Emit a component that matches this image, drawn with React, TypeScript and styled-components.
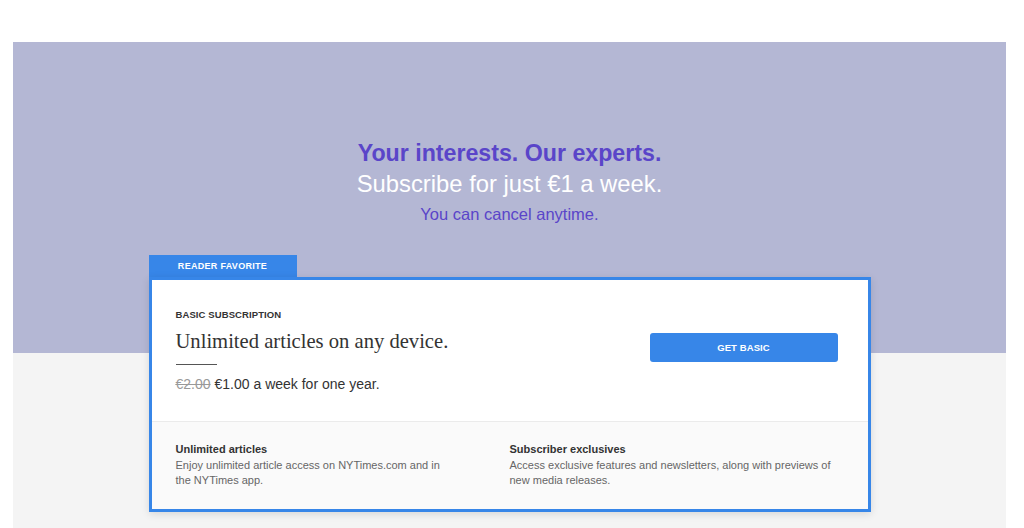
import React from "react";
import styled, { createGlobalStyle } from "styled-components";

const GlobalStyle = createGlobalStyle`
  body {
    margin: 0;
    background: #ffffff;
    font-family: "Liberation Sans", Arial, sans-serif;
  }
`;

const Page = styled.div`
  padding: 42px 18px 0 13px;
`;

const Section = styled.section`
  height: 486px;
  overflow: hidden;
  background: linear-gradient(to bottom, #b4b7d4 311px, #f4f4f4 311px);
  padding-top: 97px;
  box-sizing: border-box;
`;

const Intro = styled.div`
  text-align: center;
  margin-bottom: 31px;
`;

const Headline = styled.h1`
  margin: 0;
  font-size: 23.2px;
  line-height: 28px;
  font-weight: 700;
  color: #5a45c9;
`;

const Subline = styled.p`
  margin: 3px 0 0;
  font-size: 23.8px;
  line-height: 28px;
  color: #ffffff;
`;

const Cancel = styled.p`
  margin: 6px 0 0;
  font-size: 16.5px;
  line-height: 20px;
  color: #5a45c9;
`;

const CardWrap = styled.div`
  width: 722px;
  margin: 0 auto;
`;

const Tab = styled.div`
  width: 148px;
  height: 22px;
  background: #3786e8;
  color: #ffffff;
  font-size: 9px;
  font-weight: 700;
  letter-spacing: 0.3px;
  line-height: 23px;
  text-align: center;
`;

const Card = styled.div`
  border: 3px solid #3786e8;
  background: #ffffff;
  box-shadow: 0 2px 8px rgba(0, 0, 0, 0.12);
`;

const Top = styled.div`
  display: flex;
  align-items: flex-start;
  justify-content: space-between;
  padding: 29px 30px 28px 24px;
  border-bottom: 1px solid #ebebeb;
`;

const Offer = styled.div`
  display: flex;
  flex-direction: column;
`;

const Label = styled.div`
  font-size: 9.5px;
  font-weight: 700;
  letter-spacing: 0.1px;
  color: #333333;
  line-height: 12px;
`;

const Title = styled.div`
  margin-top: 6px;
  font-family: "Liberation Serif", "Times New Roman", serif;
  font-size: 20.6px;
  line-height: 28px;
  color: #333333;
`;

const Rule = styled.div`
  width: 41px;
  height: 1px;
  background: #555555;
  margin: 9px 0 10px;
`;

const Price = styled.div`
  font-size: 14px;
  line-height: 18px;
  color: #333333;
`;

const OldPrice = styled.s`
  color: #999999;
  margin-right: 4px;
`;

const Button = styled.button`
  width: 188px;
  height: 29px;
  margin-top: 24px;
  border: none;
  border-radius: 3px;
  background: #3786e8;
  color: #ffffff;
  font-family: "Liberation Sans", Arial, sans-serif;
  font-size: 9.5px;
  font-weight: 700;
  letter-spacing: 0.1px;
`;

const Bottom = styled.div`
  display: grid;
  grid-template-columns: 280px 1fr;
  column-gap: 54px;
  padding: 20px 24px 21px;
  background: #fafafa;
`;

const Feature = styled.div`
  display: flex;
  flex-direction: column;
  gap: 2px;
`;

const FeatureTitle = styled.div`
  font-size: 11px;
  font-weight: 700;
  line-height: 14px;
  color: #333333;
`;

const FeatureText = styled.div`
  font-size: 11px;
  line-height: 15px;
  color: #666666;
`;

const features = [
  {
    title: "Unlimited articles",
    text: "Enjoy unlimited article access on NYTimes.com and in the NYTimes app.",
  },
  {
    title: "Subscriber exclusives",
    text: "Access exclusive features and newsletters, along with previews of new media releases.",
  },
];

const App = () => {
  return (
    <>
      <GlobalStyle />
      <Page>
        <Section>
          <Intro>
            <Headline>Your interests. Our experts.</Headline>
            <Subline>Subscribe for just €1 a week.</Subline>
            <Cancel>You can cancel anytime.</Cancel>
          </Intro>
          <CardWrap>
            <Tab>READER FAVORITE</Tab>
            <Card>
              <Top>
                <Offer>
                  <Label>BASIC SUBSCRIPTION</Label>
                  <Title>Unlimited articles on any device.</Title>
                  <Rule />
                  <Price>
                    <OldPrice>€2.00</OldPrice>€1.00 a week for one year.
                  </Price>
                </Offer>
                <Button>GET BASIC</Button>
              </Top>
              <Bottom>
                {features.map((f, i) => (
                  <Feature key={i}>
                    <FeatureTitle>{f.title}</FeatureTitle>
                    <FeatureText>{f.text}</FeatureText>
                  </Feature>
                ))}
              </Bottom>
            </Card>
          </CardWrap>
        </Section>
      </Page>
    </>
  );
};

export default App;
